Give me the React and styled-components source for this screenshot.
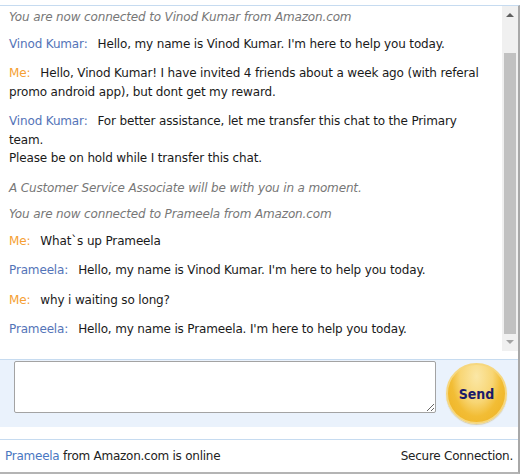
import React from 'react';
import styled, { createGlobalStyle } from 'styled-components';

const GlobalStyle = createGlobalStyle`
  html, body {
    margin: 0;
    padding: 0;
    background: #ffffff;
  }
  body {
    font-family: "DejaVu Sans", Verdana, sans-serif;
    font-size: 12px;
  }
`;

const Window = styled.div`
  width: 518px;
  margin-top: 5px;
  border-top: 1px solid #c6dbf0;
  border-right: 2px solid #a8a8a8;
  border-bottom: 2px solid #b4b4b4;
  background: #ffffff;
`;

const ChatArea = styled.div`
  display: flex;
  height: 353px;
`;

const Messages = styled.div`
  flex: 1;
  padding: 2px 14px 0 9px;
  letter-spacing: -0.15px;
  line-height: 18.5px;
`;

const Row = styled.div`
  color: ${p => (p.system ? '#777777' : '#1a1a1a')};
  font-style: ${p => (p.system ? 'italic' : 'normal')};
  margin-bottom: ${p => (p.system ? '8px' : '11px')};
`;

const Label = styled.span`
  color: ${p => (p.me ? '#f5a033' : '#5474b8')};
  margin-right: 10px;
`;

const ScrollTrack = styled.div`
  width: 16px;
  height: 345px;
  background: #f0f0f0;
  display: flex;
  flex-direction: column;
  align-items: center;
`;

const Arrow = styled.div`
  width: 0;
  height: 0;
  border-left: 4px solid transparent;
  border-right: 4px solid transparent;
  ${p => (p.down ? 'border-top: 4px solid #a3a3a3;' : 'border-bottom: 4px solid #606060;')}
  margin: ${p => (p.down ? '6px 0 0' : '7px 0 0')};
`;

const Thumb = styled.div`
  width: 12px;
  height: 281px;
  margin-top: 36px;
  background: #c1c1c1;
`;

const InputBar = styled.div`
  display: flex;
  align-items: flex-start;
  height: 67px;
  border-top: 1px solid #c6dbf0;
  background: #eaf2fc;
  padding: 0 0 0 14px;
`;

const Box = styled.textarea`
  width: 422px;
  height: 52px;
  margin-top: 1px;
  box-sizing: border-box;
  border: 1px solid #a3a3a3;
  border-radius: 2px;
  background: #ffffff;
  font-family: "DejaVu Sans", Verdana, sans-serif;
  font-size: 12px;
  outline: none;
`;

const SendButton = styled.button`
  width: 61px;
  height: 61px;
  margin: 3px 0 0 10px;
  border-radius: 50%;
  border: 2px solid #f6d77e;
  background: radial-gradient(ellipse at 50% 20%, #fbe7a6 0%, #f8d675 40%, #f2bd35 62%, #eeb020 100%);
  box-shadow: 0 1px 1px rgba(180, 140, 40, 0.35);
  color: #1b1a6a;
  font-family: "DejaVu Sans Condensed", "DejaVu Sans", sans-serif;
  font-weight: bold;
  font-size: 14px;
  padding: 0;
  cursor: pointer;
`;

const Spacer = styled.div`
  height: 12px;
`;

const Footer = styled.div`
  display: flex;
  justify-content: space-between;
  align-items: center;
  height: 32px;
  border-top: 1px solid #c6dbf0;
  padding: 0 5px 0 5px;
  color: #222222;
  letter-spacing: -0.25px;
`;

const Agent = styled.span`
  color: #4a77c2;
`;

const rows = [
  { system: true, text: 'You are now connected to Vinod Kumar from Amazon.com' },
  { who: 'Vinod Kumar:', text: "Hello, my name is Vinod Kumar. I'm here to help you today." },
  { who: 'Me:', me: true, text: 'Hello, Vinod Kumar! I have invited 4 friends about a week ago (with referal promo android app), but dont get my reward.' },
  { who: 'Vinod Kumar:', text: 'For better assistance, let me transfer this chat to the Primary team.', extra: 'Please be on hold while I transfer this chat.' },
  { system: true, text: 'A Customer Service Associate will be with you in a moment.' },
  { system: true, text: 'You are now connected to Prameela from Amazon.com' },
  { who: 'Me:', me: true, text: 'What`s up Prameela' },
  { who: 'Prameela:', text: "Hello, my name is Vinod Kumar. I'm here to help you today." },
  { who: 'Me:', me: true, text: 'why i waiting so long?' },
  { who: 'Prameela:', text: "Hello, my name is Prameela. I'm here to help you today." },
];

export default function App() {
  return (
    <>
      <GlobalStyle />
      <Window>
        <ChatArea>
          <Messages>
            {rows.map((r, i) => (
              <Row key={i} system={r.system}>
                {r.who && <Label me={r.me}>{r.who}</Label>}
                {r.text}
                {r.extra && (<><br />{r.extra}</>)}
              </Row>
            ))}
          </Messages>
          <ScrollTrack>
            <Arrow />
            <Thumb />
            <Arrow down />
          </ScrollTrack>
        </ChatArea>
        <InputBar>
          <Box />
          <SendButton>Send</SendButton>
        </InputBar>
        <Spacer />
        <Footer>
          <span><Agent>Prameela</Agent> from Amazon.com is online</span>
          <span>Secure Connection.</span>
        </Footer>
      </Window>
    </>
  );
}
